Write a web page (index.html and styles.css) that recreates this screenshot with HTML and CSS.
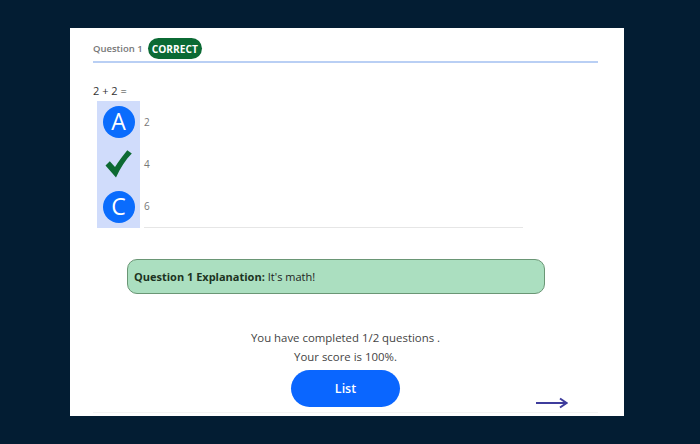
FILE: index.html
```html
<!DOCTYPE html>
<html lang="en">
<head>
<meta charset="utf-8">
<title>Quiz</title>
<link rel="stylesheet" href="styles.css">
</head>
<body>
<main class="panel">
  <header class="q-header">
    <span class="q-label">Question 1</span>
    <span class="badge">CORRECT</span>
  </header>

  <p class="q-text">2 + 2 =</p>

  <ul class="options">
    <li class="option">
      <span class="marker"><span class="circle">A</span></span>
      <span class="answer">2</span>
    </li>
    <li class="option">
      <span class="marker">
        <svg class="check" width="27" height="28" viewBox="0 0 27 28" aria-hidden="true">
          <path d="M0.5 15.5 L4.8 11.2 L10 17 C14 11 18 5.5 22.3 0.3 L26.8 3.6 C20.5 10 15.5 18 11 27.5 Z" fill="#0d6a32"/>
        </svg>
      </span>
      <span class="answer">4</span>
    </li>
    <li class="option">
      <span class="marker"><span class="circle">C</span></span>
      <span class="answer last">6</span>
    </li>
  </ul>

  <div class="explanation">
    <strong>Question 1 Explanation:</strong> It's math!
  </div>

  <div class="summary">
    <p>You have completed 1/2 questions .</p>
    <p>Your score is 100%.</p>
  </div>

  <footer class="nav">
    <span></span>
    <button class="list-btn" type="button">List</button>
    <a class="next" href="#" aria-label="Next">
      <svg width="32" height="12" viewBox="0 0 32 12" aria-hidden="true">
        <path d="M0 6 H30" stroke="#3e3c9c" stroke-width="2"/>
        <path d="M24 1.5 L30.5 6 L24 10.5" fill="none" stroke="#3e3c9c" stroke-width="2"/>
      </svg>
    </a>
  </footer>
</main>
</body>
</html>
```

FILE: styles.css
```css
* {
  box-sizing: border-box;
}

html, body {
  margin: 0;
  height: 100%;
}

body {
  background: #031d33;
  font-family: "Open Sans", "Liberation Sans", sans-serif;
  color: #333;
  padding: 28px 0 0 70px;
}

.panel {
  width: 554px;
  height: 388px;
  background: #fff;
  padding: 10px 26px 0 23px;
}

.q-header {
  display: flex;
  align-items: center;
  gap: 5px;
  padding-bottom: 2px;
  border-bottom: 2px solid #b9cff4;
}

.q-label {
  font-size: 9.5px;
  font-weight: 600;
  color: #777;
}

.badge {
  display: inline-flex;
  align-items: center;
  justify-content: center;
  height: 21px;
  width: 54px;
  border-radius: 11px;
  background: #0b6a34;
  color: #fff;
  font-size: 10.2px;
  font-weight: 700;
}

.q-text {
  margin: 19px 0 0;
  font-size: 11px;
  line-height: 18px;
  color: #333;
}

.options {
  list-style: none;
  margin: 1px 0 0 4px;
  padding: 0;
}

.option {
  display: flex;
  height: 42px;
}

.option:last-child {
  height: 43px;
}

.marker {
  width: 43px;
  display: flex;
  align-items: center;
  justify-content: center;
  background: #d0dcfb;
}

.circle {
  width: 32px;
  height: 32px;
  border-radius: 50%;
  background: #0a6cfd;
  color: #fff;
  display: flex;
  align-items: center;
  justify-content: center;
  font-size: 23px;
  line-height: 1;
  padding-bottom: 1px;
}

.check {
  display: block;
}

.answer {
  width: 379px;
  margin-left: 4px;
  display: flex;
  align-items: center;
  font-size: 10px;
  color: #777;
}

.answer.last {
  border-bottom: 1px solid #e6e6e6;
}

.explanation {
  margin: 31px 0 0 34px;
  width: 418px;
  height: 35px;
  border: 1px solid #6a9675;
  border-radius: 10px;
  background: #abdfc0;
  padding: 0 6px;
  display: flex;
  align-items: center;
  gap: 3px;
  font-size: 11px;
  color: #222;
}

.explanation strong {
  font-weight: 700;
  color: #1c3322;
}

.summary {
  margin-top: 34px;
  text-align: center;
  font-size: 11.4px;
  line-height: 19px;
  color: #444;
}

.summary p {
  margin: 0;
}

.nav {
  margin-top: 4px;
  display: grid;
  grid-template-columns: 1fr auto 1fr;
  padding-bottom: 5px;
  border-bottom: 1px solid #f4f4f4;
}

.list-btn {
  width: 109px;
  height: 37px;
  border: 0;
  border-radius: 19px;
  background: #0a66ff;
  color: #fff;
  font-family: inherit;
  font-size: 12.5px;
  font-weight: 600;
}

.next {
  justify-self: end;
  align-self: end;
  margin-right: 30px;
  margin-bottom: -2px;
  display: block;
  line-height: 0;
}
```
